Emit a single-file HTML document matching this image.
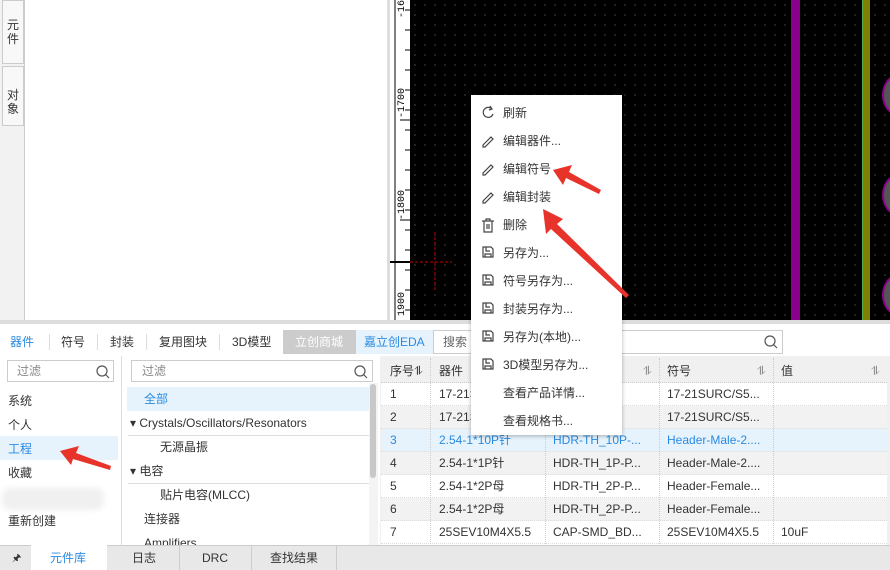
<!DOCTYPE html>
<html><head><meta charset="utf-8"><style>
*{margin:0;padding:0;box-sizing:border-box}
body{width:890px;height:570px;overflow:hidden;position:relative;background:#f0f0f0;font-family:"Liberation Sans","Noto Sans CJK SC",sans-serif;font-size:12px;line-height:15px;color:#333}
.a{position:absolute}
.t{position:absolute;white-space:nowrap}
.menu div{position:absolute;left:32px;font-size:12px;color:#333}
.row{position:absolute;left:381px;width:506px;height:23px;border-bottom:1px dotted #ddd}
.row span{position:absolute;top:4px;white-space:nowrap;line-height:15px}
</style></head><body>
<div class="a" style="left:0;top:0;width:25px;height:320px;background:#f2f2f2;border-right:1px solid #ccc"></div>
<div class="a" style="left:2px;top:0;width:22px;height:64px;background:#f8f8f8;border:1px solid #ccc"></div>
<div class="t" style="left:7px;top:18px;width:12px;white-space:normal;line-height:14px">元件</div>
<div class="a" style="left:2px;top:66px;width:22px;height:60px;background:#f8f8f8;border:1px solid #ccc"></div>
<div class="t" style="left:7px;top:88px;width:12px;white-space:normal;line-height:14px">对象</div>
<div class="a" style="left:25px;top:0;width:362px;height:320px;background:#fff"></div>
<div class="a" style="left:387px;top:0;width:23px;height:320px;background:#fff;border-left:3px solid #ddd"></div>
<svg class="a" style="left:390px;top:0" width="20" height="320">
<g stroke="#000" stroke-width="1">
<line x1="5" y1="0" x2="5" y2="320"/>
<path d="M15 10h5M15 30h5M15 50h5M15 70h5M15 90h5M15 110h5M10 120h10M15 130h5M15 150h5M15 170h5M15 190h5M15 210h5M10 220h10M15 230h5M15 250h5M15 270h5M15 290h5M15 310h5"/>
<line x1="0" y1="262" x2="20" y2="262" stroke-width="2"/>
</g>
<g font-size="10" font-family="Liberation Mono" fill="#000">
<text transform="translate(14,118) rotate(-90)">-1700</text>
<text transform="translate(14,220) rotate(-90)">-1800</text>
<text transform="translate(14,316) rotate(-90)">1900</text>
<text transform="translate(14,18) rotate(-90)">-16</text>
</g></svg>
<div class="a" style="left:410px;top:0;width:480px;height:320px;background:#000;background-image:radial-gradient(#777 0.6px,transparent 0.8px);background-size:10px 10px"></div>
<div class="a" style="left:791px;top:0;width:9px;height:320px;background:#8a008a"></div>
<div class="a" style="left:862px;top:0;width:8px;height:320px;background:#808000;border-left:1px solid #5a5"></div>
<div class="a" style="left:882px;top:75px;width:30px;height:40px;border-radius:50%;background:#555;border:2px solid #8a008a"></div>
<div class="a" style="left:882px;top:175px;width:30px;height:40px;border-radius:50%;background:#555;border:2px solid #8a008a"></div>
<div class="a" style="left:882px;top:275px;width:30px;height:40px;border-radius:50%;background:#555;border:2px solid #8a008a"></div>
<svg class="a" style="left:410px;top:230px" width="50" height="60"><path d="M0 32H42M25 2V62" stroke="#c00" stroke-dasharray="3 2"/></svg>
<div class="a" style="left:0;top:320px;width:890px;height:4px;background:#ddd"></div>
<div class="a" style="left:0;top:324px;width:890px;height:32px;background:#fff"></div>
<div class="t" style="left:10px;top:335px;color:#2a8ae0">器件</div>
<div class="t" style="left:61px;top:335px">符号</div>
<div class="t" style="left:110px;top:335px">封装</div>
<div class="t" style="left:159px;top:335px">复用图块</div>
<div class="t" style="left:232px;top:335px">3D模型</div>
<div class="a" style="left:49px;top:334px;width:1px;height:16px;background:#ddd"></div>
<div class="a" style="left:97px;top:334px;width:1px;height:16px;background:#ddd"></div>
<div class="a" style="left:146px;top:334px;width:1px;height:16px;background:#ddd"></div>
<div class="a" style="left:219px;top:334px;width:1px;height:16px;background:#ddd"></div>
<div class="a" style="left:283px;top:330px;width:73px;height:24px;background:#ccc"></div>
<div class="t" style="left:295px;top:335px;color:#fff">立创商城</div>
<div class="a" style="left:356px;top:330px;width:77px;height:24px;background:#e6f3fd"></div>
<div class="t" style="left:364px;top:335px;color:#2a8ae0">嘉立创EDA</div>
<div class="a" style="left:433px;top:330px;width:350px;height:24px;border:1px solid #ccc;background:#fff"></div>
<div class="t" style="left:443px;top:335px;color:#666">搜索</div>
<svg class="a" style="left:763px;top:334px" width="16" height="16"><circle cx="7" cy="7" r="5" fill="none" stroke="#555" stroke-width="1.2"/><path d="M10.5 10.5l3.5 3.5" stroke="#555" stroke-width="1.2"/></svg>
<div class="a" style="left:0;top:356px;width:122px;height:189px;background:#fff;border-right:1px solid #ddd"></div>
<div class="a" style="left:7px;top:360px;width:107px;height:22px;border:1px solid #ccc"></div>
<div class="t" style="left:17px;top:364px;color:#888">过滤</div>
<svg class="a" style="left:95px;top:364px" width="16" height="16"><circle cx="7" cy="7" r="5" fill="none" stroke="#555" stroke-width="1.2"/><path d="M10.5 10.5l3.5 3.5" stroke="#555" stroke-width="1.2"/></svg>
<div class="t" style="left:8px;top:394px">系统</div>
<div class="t" style="left:8px;top:418px">个人</div>
<div class="a" style="left:0;top:436px;width:118px;height:24px;background:#e6f3fd"></div>
<div class="t" style="left:8px;top:442px;color:#2a8ae0">工程</div>
<div class="t" style="left:8px;top:466px">收藏</div>
<div class="a" style="left:2px;top:488px;width:102px;height:22px;background:#f0f0f0;border-radius:8px;filter:blur(3px)"></div>
<div class="t" style="left:8px;top:514px">重新创建</div>
<div class="a" style="left:122px;top:356px;width:258px;height:189px;background:#fff"></div>
<div class="a" style="left:131px;top:360px;width:242px;height:22px;border:1px solid #ccc"></div>
<div class="t" style="left:142px;top:364px;color:#888">过滤</div>
<svg class="a" style="left:353px;top:364px" width="16" height="16"><circle cx="7" cy="7" r="5" fill="none" stroke="#555" stroke-width="1.2"/><path d="M10.5 10.5l3.5 3.5" stroke="#555" stroke-width="1.2"/></svg>
<div class="a" style="left:127px;top:387px;width:242px;height:24px;background:#e6f3fd"></div>
<div class="t" style="left:144px;top:392px;color:#2a8ae0">全部</div>
<div class="t" style="left:130px;top:416px">▾ Crystals/Oscillators/Resonators</div>
<div class="a" style="left:128px;top:435px;width:241px;height:1px;background:#ddd"></div>
<div class="t" style="left:160px;top:440px">无源晶振</div>
<div class="t" style="left:130px;top:464px">▾ 电容</div>
<div class="a" style="left:128px;top:483px;width:241px;height:1px;background:#ddd"></div>
<div class="t" style="left:160px;top:488px">贴片电容(MLCC)</div>
<div class="t" style="left:144px;top:512px">连接器</div>
<div class="t" style="left:144px;top:536px">Amplifiers</div>
<div class="a" style="left:369px;top:383px;width:9px;height:162px;background:#f4f4f4"></div>
<div class="a" style="left:370px;top:384px;width:6px;height:94px;background:#c8c8c8;border-radius:3px"></div>
<div class="a" style="left:381px;top:358px;width:506px;height:187px;background:#fff"></div>
<div class="a" style="left:381px;top:358px;width:506px;height:25px;background:#f0f0f0;border-bottom:1px dotted #ccc"></div>
<div class="t" style="left:390px;top:364px">序号⥮</div>
<div class="t" style="left:439px;top:364px">器件</div>
<div class="t" style="left:643px;top:364px;color:#888">⥮</div>
<div class="t" style="left:667px;top:364px">符号</div>
<div class="t" style="left:757px;top:364px;color:#888">⥮</div>
<div class="t" style="left:781px;top:364px">值</div>
<div class="t" style="left:871px;top:364px;color:#888">⥮</div>
<div class="row" style="top:383px"><span style="left:9px">1</span><span style="left:58px">17-21SURC</span><span style="left:172px">SURC-RD</span><span style="left:286px">17-21SURC/S5...</span></div>
<div class="row" style="top:406px;background:#f2f2f2"><span style="left:9px">2</span><span style="left:58px">17-21SURC</span><span style="left:172px">SURC-RD</span><span style="left:286px">17-21SURC/S5...</span></div>
<div class="row" style="top:429px;background:#e6f3fd;color:#2a8ae0"><span style="left:9px">3</span><span style="left:58px">2.54-1*10P针</span><span style="left:172px">HDR-TH_10P-...</span><span style="left:286px">Header-Male-2....</span></div>
<div class="row" style="top:452px;background:#f2f2f2"><span style="left:9px">4</span><span style="left:58px">2.54-1*1P针</span><span style="left:172px">HDR-TH_1P-P...</span><span style="left:286px">Header-Male-2....</span></div>
<div class="row" style="top:475px"><span style="left:9px">5</span><span style="left:58px">2.54-1*2P母</span><span style="left:172px">HDR-TH_2P-P...</span><span style="left:286px">Header-Female...</span></div>
<div class="row" style="top:498px;background:#f2f2f2"><span style="left:9px">6</span><span style="left:58px">2.54-1*2P母</span><span style="left:172px">HDR-TH_2P-P...</span><span style="left:286px">Header-Female...</span></div>
<div class="row" style="top:521px"><span style="left:9px">7</span><span style="left:58px">25SEV10M4X5.5</span><span style="left:172px">CAP-SMD_BD...</span><span style="left:286px">25SEV10M4X5.5</span><span style="left:400px">10uF</span></div>
<div class="a" style="left:430px;top:358px;width:1px;height:186px;border-left:1px dotted #ccc"></div>
<div class="a" style="left:545px;top:358px;width:1px;height:186px;border-left:1px dotted #ccc"></div>
<div class="a" style="left:659px;top:358px;width:1px;height:186px;border-left:1px dotted #ccc"></div>
<div class="a" style="left:773px;top:358px;width:1px;height:186px;border-left:1px dotted #ccc"></div>
<div class="a" style="left:0;top:545px;width:890px;height:25px;background:#e8e8e8;border-top:1px solid #ccc"></div>
<div class="t" style="left:12px;top:551px;font-size:10px">🖈</div>
<div class="a" style="left:31px;top:545px;width:76px;height:25px;background:#fff"></div>
<div class="t" style="left:50px;top:551px;color:#2a8ae0">元件库</div>
<div class="a" style="left:179px;top:546px;width:1px;height:24px;background:#ccc"></div>
<div class="a" style="left:251px;top:546px;width:1px;height:24px;background:#ccc"></div>
<div class="a" style="left:336px;top:546px;width:1px;height:24px;background:#ccc"></div>
<div class="t" style="left:132px;top:551px">日志</div>
<div class="t" style="left:202px;top:551px">DRC</div>
<div class="t" style="left:270px;top:551px">查找结果</div>
<div class="a menu" style="left:471px;top:95px;width:151px;height:340px;background:#fff;box-shadow:0 1px 4px rgba(0,0,0,.3)">
<div style="top:11px">刷新</div>
<div style="top:39px">编辑器件...</div>
<div style="top:67px">编辑符号</div>
<div style="top:95px">编辑封装</div>
<div style="top:123px">删除</div>
<div style="top:151px">另存为...</div>
<div style="top:179px">符号另存为...</div>
<div style="top:207px">封装另存为...</div>
<div style="top:235px">另存为(本地)...</div>
<div style="top:263px">3D模型另存为...</div>
<div style="top:291px">查看产品详情...</div>
<div style="top:319px">查看规格书...</div>
<svg class="a" style="left:10px;top:10px" width="14" height="280" fill="none" stroke="#444" stroke-width="1.2">
<path d="M11 4A5 5 0 1 0 12 9M9 1l2 3-3 1"/>
<path d="M2 40l8-8 2 2-8 8H2z"/>
<path d="M2 68l8-8 2 2-8 8H2z"/>
<path d="M2 96l8-8 2 2-8 8H2z"/>
<path d="M1 116h12M5 116v-2h4v2M3 116v11h8v-11M6 119v5M8 119v5"/>
<path d="M2 142h8l2 2v8H2zM5 142v4h4M4 152v-3h6v3"/>
<path d="M2 170h8l2 2v8H2zM5 170v4h4M4 180v-3h6v3"/>
<path d="M2 198h8l2 2v8H2zM5 198v4h4M4 208v-3h6v3"/>
<path d="M2 226h8l2 2v8H2zM5 226v4h4M4 236v-3h6v3"/>
<path d="M2 254h8l2 2v8H2zM5 254v4h4M4 264v-3h6v3"/>
</svg>
</div>
<svg class="a" style="left:0;top:0" width="890" height="570">
<g fill="#e8332a">
<polygon points="553,170 572,165 569,172 601,190 599,194 566,178 563,185"/>
<polygon points="543,209 563,219 557,224 629,295 626,298 551,229 546,234"/>
<polygon points="60,451 79,446 76,453 111,466 110,470 73,459 71,465"/>
</g></svg>
</body></html>
